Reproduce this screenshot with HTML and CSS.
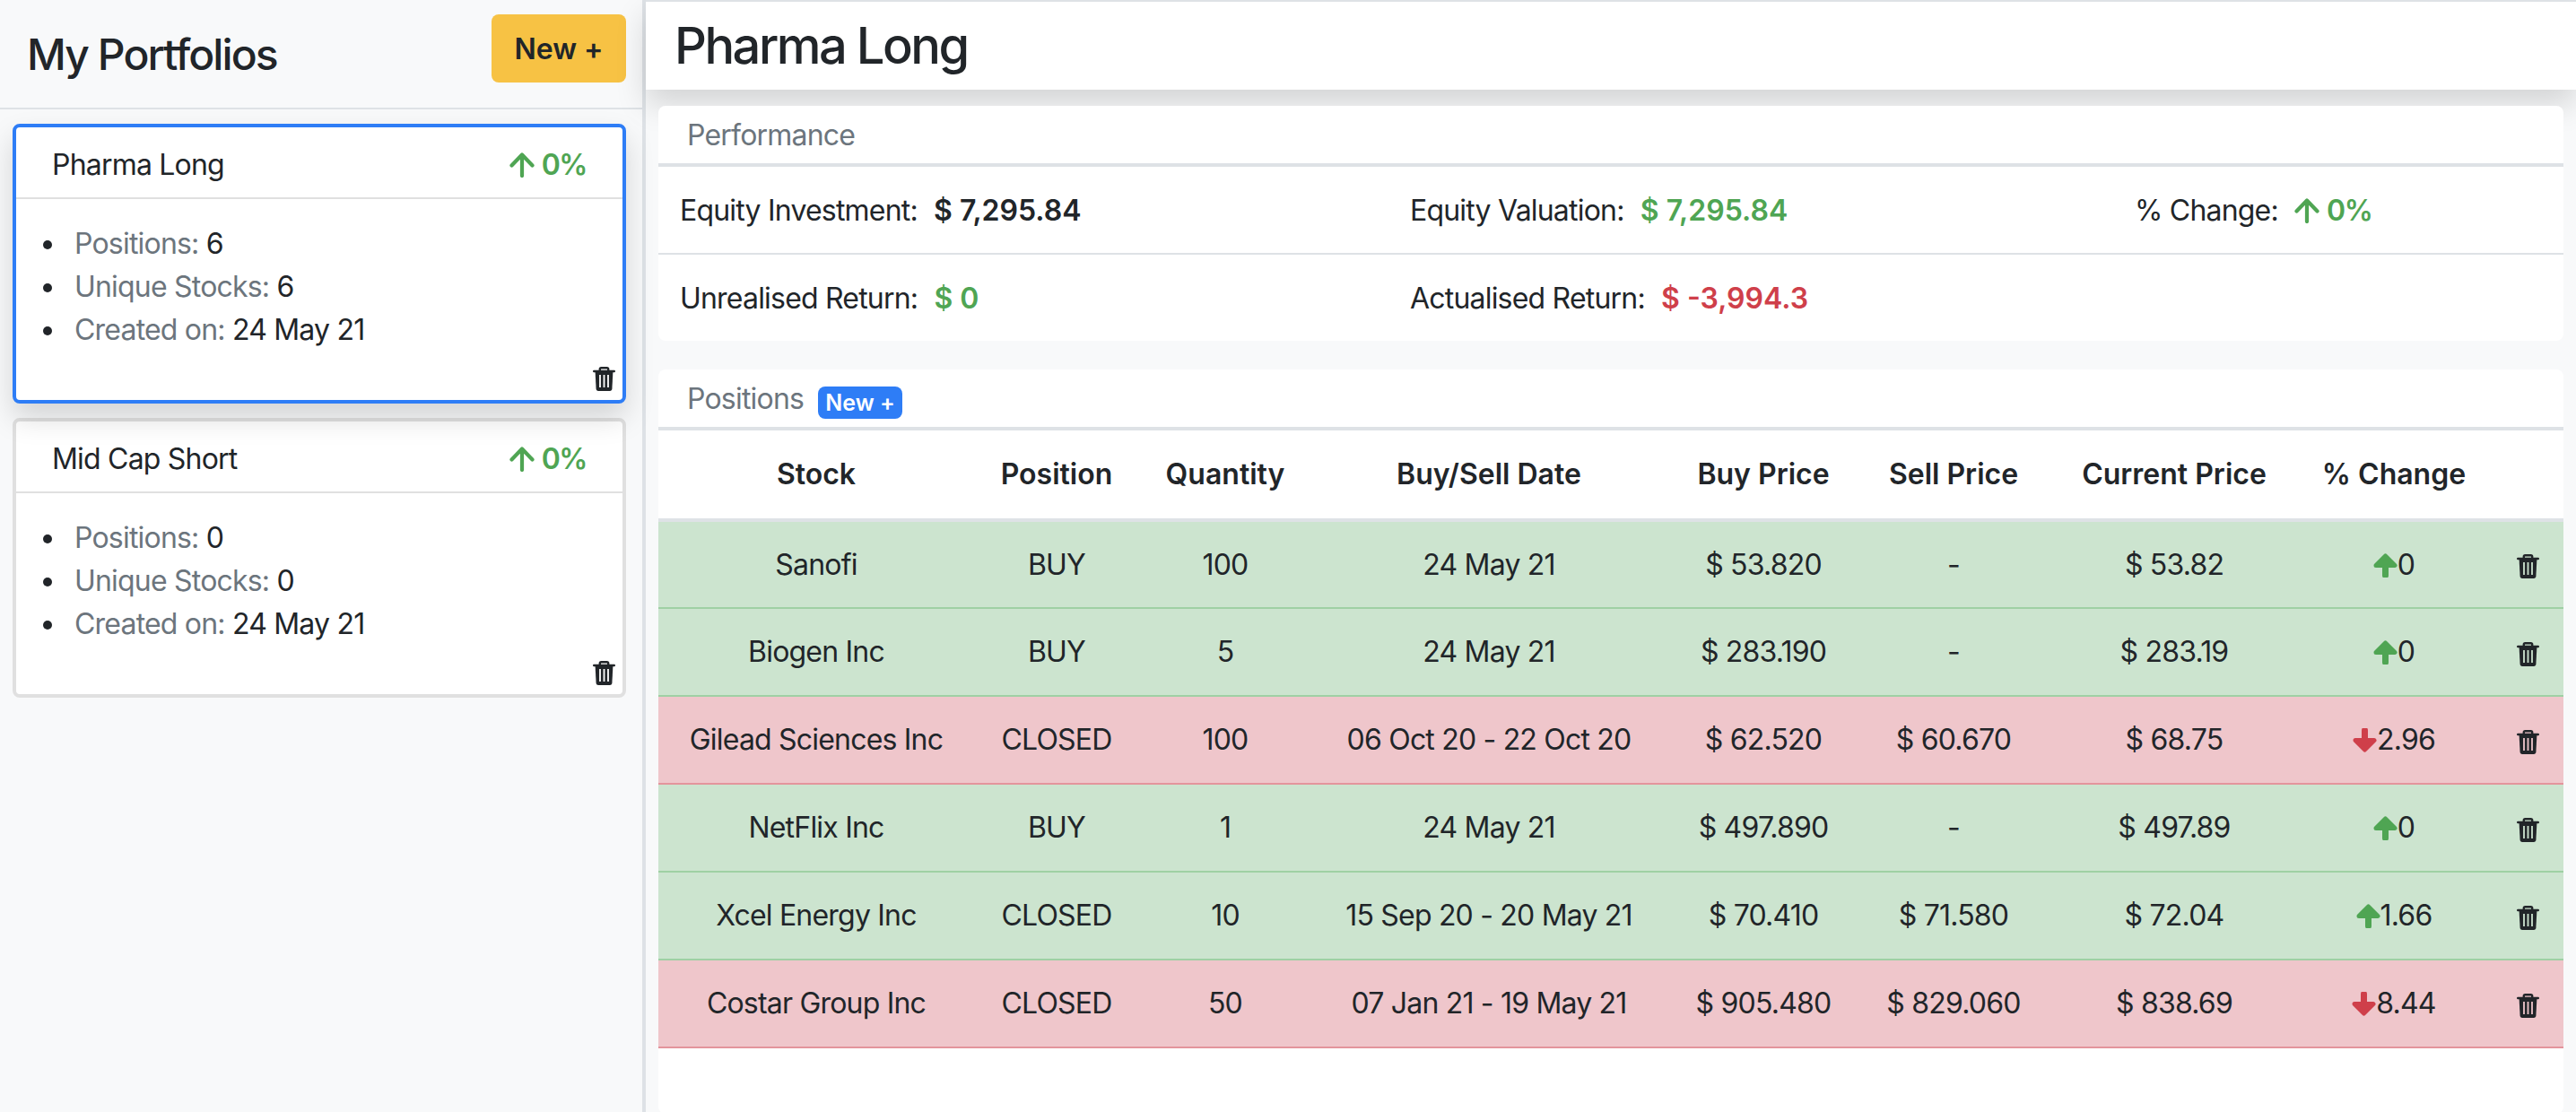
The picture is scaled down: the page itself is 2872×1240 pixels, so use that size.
FILE: index.html
```html
<!DOCTYPE html>
<html lang="en">
	<head>
		<meta charset="UTF-8" />
		<title>My Portfolios</title>
		<link rel="stylesheet" href="styles.css">
	</head>
	<body>
		<svg class="defs" width="0" height="0">
			<symbol id="trash" viewBox="0 0 25 27">
				<path d="M1.200 5h22.600M7.800 4.600V2.800c0-.9.600-1.500 1.500-1.500h6.400c.9 0 1.500.6 1.500 1.500v1.800" fill="none" stroke="currentColor" stroke-width="2.400" stroke-linecap="round"/>
				<path d="M2.600 5.500h19.800l-1 19c-.1 1.500-1 2.500-2.500 2.500H6.100c-1.500 0-2.400-1-2.500-2.500z" fill="currentColor"/>
				<path d="M8 9v14M12.500 9v14M17 9v14" fill="none" stroke="var(--trash-gap, #fff)" stroke-width="1.800"/>
			</symbol>
			<symbol id="arrow-thin" viewBox="0 0 28 28">
				<path d="M14 26V3.500M2.500 14.500L14 2.500l11.500 12" fill="none" stroke="currentColor" stroke-width="4.200" stroke-linecap="round" stroke-linejoin="round"/>
			</symbol>
			<symbol id="arrow-bold" viewBox="0 0 27 27">
				<path d="M13.500 24.500V6" fill="none" stroke="currentColor" stroke-width="7" stroke-linecap="round"/>
				<path d="M3 13.500L13.500 3 24 13.500z" fill="currentColor" stroke="currentColor" stroke-width="5" stroke-linejoin="round"/>
			</symbol>
			<symbol id="arrow-bold-down" viewBox="0 0 27 27">
				<path d="M13.500 2.500V21" fill="none" stroke="currentColor" stroke-width="7" stroke-linecap="round"/>
				<path d="M3 13.500L13.500 24 24 13.500z" fill="currentColor" stroke="currentColor" stroke-width="5" stroke-linejoin="round"/>
			</symbol>
		</svg>

		<aside class="sidebar">
			<div class="sidebar-head">
				<h2>My Portfolios</h2>
				<button class="btn-new" type="button">New +</button>
			</div>
			<div class="portfolio selected">
				<div class="portfolio-head">
					<span>Pharma Long</span>
					<span class="up strong"><svg class="arrow-thin"><use href="#arrow-thin"/></svg><span class="pct">0%</span></span>
				</div>
				<ul class="portfolio-info">
					<li><span class="muted">Positions:</span> 6</li>
					<li><span class="muted">Unique Stocks:</span> 6</li>
					<li><span class="muted">Created on:</span> 24 May 21</li>
				</ul>
				<div class="portfolio-foot"><svg class="trash"><use href="#trash"/></svg></div>
			</div>
			<div class="portfolio">
				<div class="portfolio-head">
					<span>Mid Cap Short</span>
					<span class="up strong"><svg class="arrow-thin"><use href="#arrow-thin"/></svg><span class="pct">0%</span></span>
				</div>
				<ul class="portfolio-info">
					<li><span class="muted">Positions:</span> 0</li>
					<li><span class="muted">Unique Stocks:</span> 0</li>
					<li><span class="muted">Created on:</span> 24 May 21</li>
				</ul>
				<div class="portfolio-foot"><svg class="trash"><use href="#trash"/></svg></div>
			</div>
		</aside>

		<main class="main">
			<header class="main-head"><h1>Pharma Long</h1></header>

			<section class="card perf">
				<div class="card-title">Performance</div>
				<div class="perf-row first">
					<div class="perf-item">Equity Investment: <b>$ 7,295.84</b></div>
					<div class="perf-item">Equity Valuation: <b class="up">$ 7,295.84</b></div>
					<div class="perf-item">% Change: <b class="up"><svg class="arrow-thin"><use href="#arrow-thin"/></svg><span class="pct">0%</span></b></div>
				</div>
				<div class="perf-row">
					<div class="perf-item">Unrealised Return: <b class="up">$ 0</b></div>
					<div class="perf-item">Actualised Return: <b class="down">$ -3,994.3</b></div>
				</div>
			</section>

			<section class="card positions">
				<div class="card-title">Positions <span class="badge-new">New +</span></div>
				<table class="pos-table">
					<thead>
						<tr>
							<th class="c-stock">Stock</th>
							<th class="c-pos">Position</th>
							<th class="c-qty">Quantity</th>
							<th class="c-date">Buy/Sell Date</th>
							<th class="c-buy">Buy Price</th>
							<th class="c-sell">Sell Price</th>
							<th class="c-cur">Current Price</th>
							<th class="c-chg">% Change</th>
							<th class="c-del"></th>
						</tr>
					</thead>
					<tbody>
						<tr class="gain">
							<td>Sanofi</td><td>BUY</td><td>100</td><td>24 May 21</td><td>$ 53.820</td><td>-</td><td>$ 53.82</td>
							<td><svg class="arrow-bold up"><use href="#arrow-bold"/></svg>0</td>
							<td class="del"><svg class="trash"><use href="#trash"/></svg></td>
						</tr>
						<tr class="gain">
							<td>Biogen Inc</td><td>BUY</td><td>5</td><td>24 May 21</td><td>$ 283.190</td><td>-</td><td>$ 283.19</td>
							<td><svg class="arrow-bold up"><use href="#arrow-bold"/></svg>0</td>
							<td class="del"><svg class="trash"><use href="#trash"/></svg></td>
						</tr>
						<tr class="loss">
							<td>Gilead Sciences Inc</td><td>CLOSED</td><td>100</td><td>06 Oct 20 - 22 Oct 20</td><td>$ 62.520</td><td>$ 60.670</td><td>$ 68.75</td>
							<td><svg class="arrow-bold down"><use href="#arrow-bold-down"/></svg>2.96</td>
							<td class="del"><svg class="trash"><use href="#trash"/></svg></td>
						</tr>
						<tr class="gain">
							<td>NetFlix Inc</td><td>BUY</td><td>1</td><td>24 May 21</td><td>$ 497.890</td><td>-</td><td>$ 497.89</td>
							<td><svg class="arrow-bold up"><use href="#arrow-bold"/></svg>0</td>
							<td class="del"><svg class="trash"><use href="#trash"/></svg></td>
						</tr>
						<tr class="gain">
							<td>Xcel Energy Inc</td><td>CLOSED</td><td>10</td><td>15 Sep 20 - 20 May 21</td><td>$ 70.410</td><td>$ 71.580</td><td>$ 72.04</td>
							<td><svg class="arrow-bold up"><use href="#arrow-bold"/></svg>1.66</td>
							<td class="del"><svg class="trash"><use href="#trash"/></svg></td>
						</tr>
						<tr class="loss">
							<td>Costar Group Inc</td><td>CLOSED</td><td>50</td><td>07 Jan 21 - 19 May 21</td><td>$ 905.480</td><td>$ 829.060</td><td>$ 838.69</td>
							<td><svg class="arrow-bold down"><use href="#arrow-bold-down"/></svg>8.44</td>
							<td class="del"><svg class="trash"><use href="#trash"/></svg></td>
						</tr>
					</tbody>
				</table>
			</section>
		</main>
	</body>
</html>
```

FILE: styles.css
```css
* {
	box-sizing: border-box;
}

html,
body {
	height: 100%;
}

body {
	margin: 0;
	display: flex;
	overflow: hidden;
	background: #f8f9fa;
	color: #212529;
	font-family: 'Inter', 'Liberation Sans', sans-serif;
	font-size: 32px;
	line-height: 1.5;
	letter-spacing: -0.8px;
}

.defs {
	position: absolute;
}

.up {
	color: #4fa553;
}

.down {
	color: #cf3f4a;
}

.muted {
	color: #6c757d;
}

.strong {
	font-weight: 600;
}

.pct {
	letter-spacing: -1.5px;
}

/* sidebar */
.sidebar {
	width: 720px;
	flex: none;
	border-right: 4px solid #dee2e6;
}

.sidebar-head {
	height: 122px;
	padding: 16px 18px 0 30px;
	display: flex;
	justify-content: space-between;
	align-items: flex-start;
	border-bottom: 2px solid #dee2e6;
}

.sidebar-head h2 {
	margin: 16px 0 0;
	font-size: 48px;
	font-weight: 500;
	line-height: 1.2;
	letter-spacing: -1.9px;
}

.btn-new {
	width: 150px;
	height: 76px;
	border: none;
	border-radius: 8px;
	background: #f7c244;
	color: #212529;
	font-family: inherit;
	font-size: 32px;
	font-weight: 600;
}

.portfolio {
	margin: 16px 18px 0 14px;
	border: 4px solid #e0e0e0;
	border-radius: 8px;
	background: #fff;
}

.portfolio.selected {
	border-color: #2e7df6;
	box-shadow: 0 16px 32px rgba(0, 0, 0, 0.15);
	position: relative;
}

.portfolio-head {
	height: 80px;
	padding: 6px 40px 0;
	display: flex;
	justify-content: space-between;
	align-items: center;
	border-bottom: 2px solid #e0e0e0;
}

.portfolio-info {
	margin: 0;
	padding: 26px 0 0 30px;
	list-style: none;
	line-height: 48px;
}

.portfolio-info li::before {
	content: '';
	display: inline-block;
	width: 10px;
	height: 10px;
	margin-right: 25px;
	border-radius: 50%;
	background: #212529;
	vertical-align: 5px;
}

.portfolio-foot {
	height: 54px;
	padding: 17px 8px 0 0;
	display: flex;
	justify-content: flex-end;
}

.trash {
	width: 25px;
	height: 27px;
	color: #212529;
	vertical-align: middle;
}

.arrow-thin {
	width: 28px;
	height: 28px;
	margin-right: 8px;
	vertical-align: -3px;
}

/* main column */
.main {
	flex: 1;
	min-width: 0;
	padding: 0 14px;
}

.main-head {
	margin: 0 -14px;
	height: 100px;
	padding: 2px 0 0 32px;
	display: flex;
	align-items: center;
	background: #fff;
	border-top: 2px solid #dee2e6;
	box-shadow: 0 16px 32px rgba(0, 0, 0, 0.15);
}

.main-head h1 {
	margin: 0;
	font-size: 56px;
	font-weight: 500;
	line-height: 1.2;
	letter-spacing: -2.5px;
}

.card {
	position: relative;
	background: #fff;
	border-radius: 8px;
}

.perf {
	margin-top: 18px;
	height: 262px;
}

.positions {
	margin-top: 32px;
	height: 830px;
}

.card-title {
	height: 68px;
	padding: 2px 32px 0;
	display: flex;
	align-items: center;
	gap: 16px;
	color: #6c757d;
	border-bottom: 4px solid #dee2e6;
}

.badge-new {
	width: 94px;
	height: 36px;
	margin-top: 8px;
	border-radius: 8px;
	background: #2e7df6;
	color: #fff;
	font-size: 25px;
	font-weight: 600;
	line-height: 36px;
	letter-spacing: 0;
	text-align: center;
}

.perf-row {
	height: 96px;
	padding: 2px 0 0 24px;
	display: grid;
	grid-template-columns: 814px 808px 1fr;
	align-items: center;
}

.perf-row.first {
	height: 98px;
	border-bottom: 2px solid #dee2e6;
}

.perf-item b {
	margin-left: 10px;
	font-weight: 600;
	letter-spacing: 0;
}

/* positions table */
.pos-table {
	width: 100%;
	border-collapse: collapse;
	table-layout: fixed;
	text-align: center;
}

.pos-table th {
	height: 100px;
	padding: 0;
	font-weight: 600;
	letter-spacing: 0;
	border-bottom: 4px solid #dee2e6;
}

.pos-table td {
	height: 98px;
	padding: 0;
}

.pos-table td.del {
	padding-left: 7px;
}

.gain {
	background: #cce4cf;
	border-bottom: 2px solid #9fd0a4;
	--trash-gap: #cce4cf;
}

.loss {
	background: #efc6cb;
	border-bottom: 2px solid #e3949c;
	--trash-gap: #efc6cb;
}

.arrow-bold {
	width: 27px;
	height: 27px;
	vertical-align: -3px;
}

.c-stock { width: 352px; }
.c-pos { width: 184px; }
.c-qty { width: 192px; }
.c-date { width: 396px; }
.c-buy { width: 216px; }
.c-sell { width: 208px; }
.c-cur { width: 284px; }
.c-chg { width: 206px; }
.c-del { width: 86px; }
```
